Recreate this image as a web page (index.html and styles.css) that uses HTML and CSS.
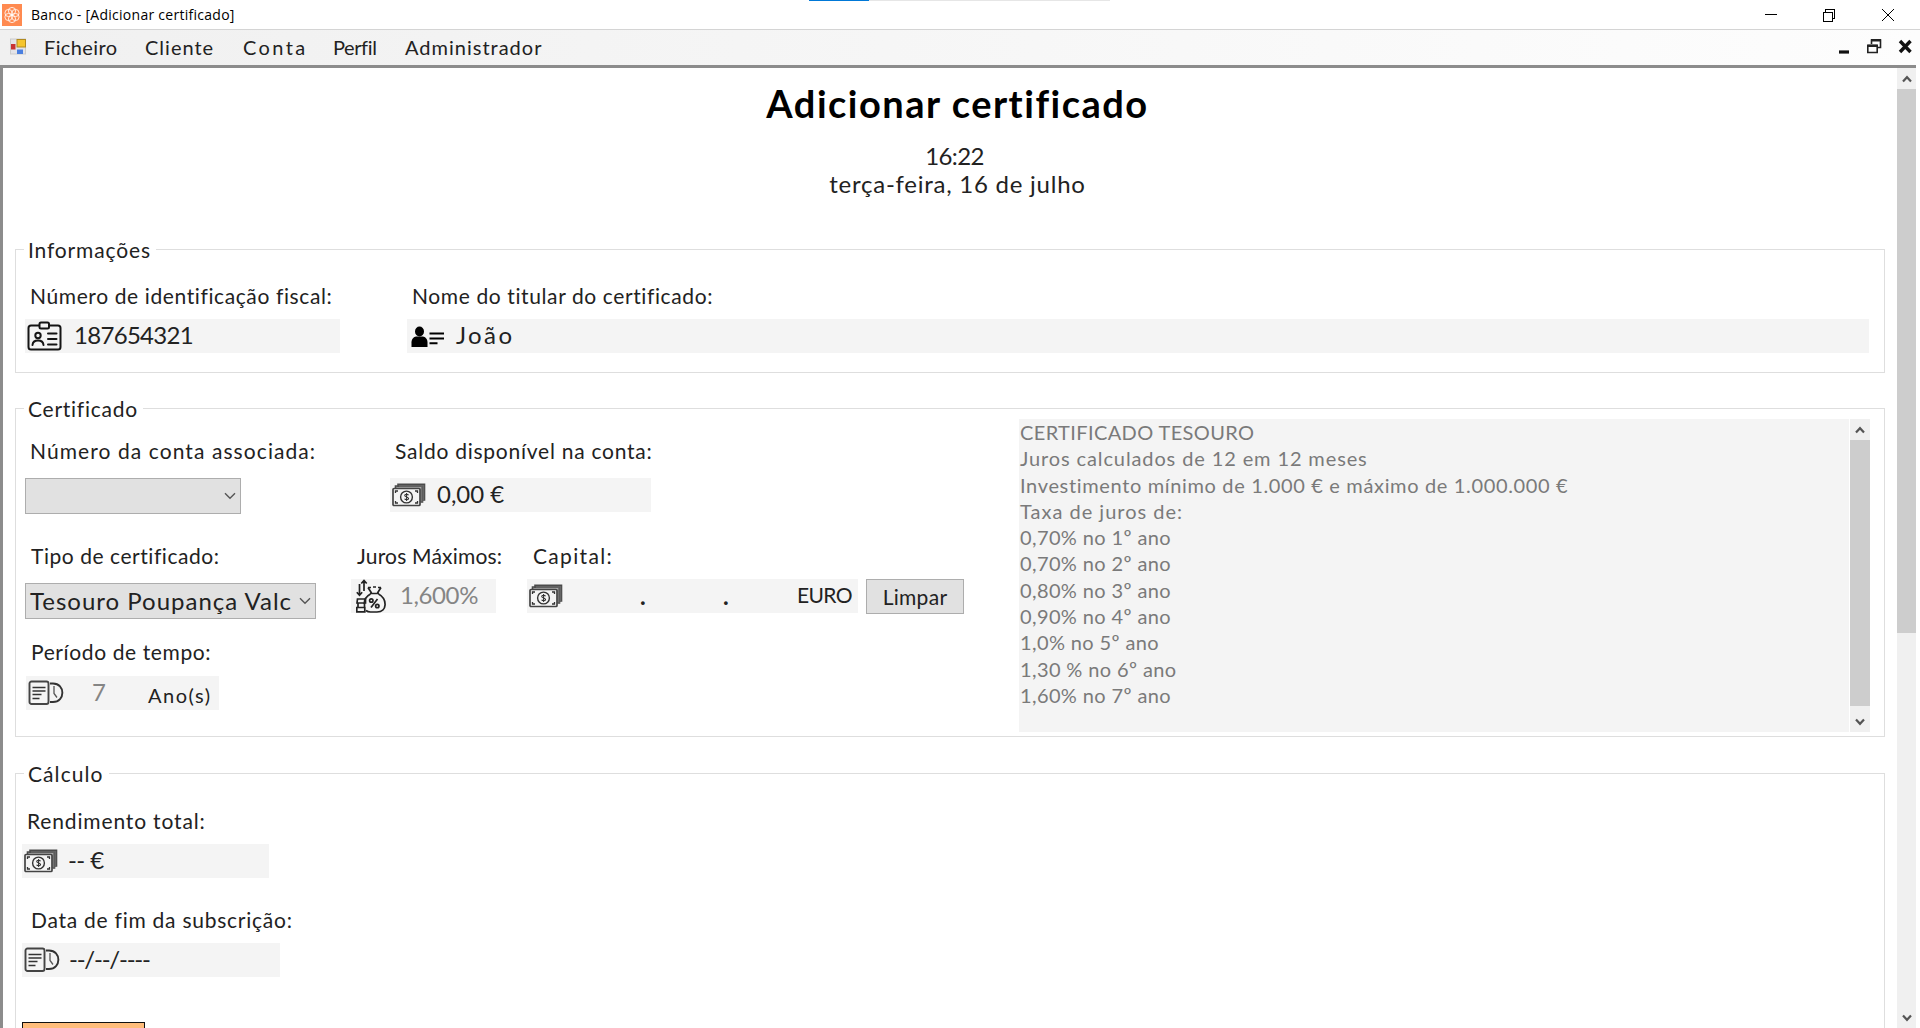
FILE: index.html
```
<!DOCTYPE html>
<html lang="pt">
<head>
<meta charset="utf-8">
<title>Banco - [Adicionar certificado]</title>
<link rel="stylesheet" href="styles.css">
</head>
<body>
<svg class="defs" width="0" height="0">
  <symbol id="cash" viewBox="0 0 34 24">
    <path d="M6 4V1.200h26.500V17H31M3.500 5V3h27v16h-2" fill="#aaa" stroke="#4a4a4a" stroke-width="1.600"/>
    <path d="M30 2v17M31.600 2v15" stroke="#666" stroke-width="1.300"/>
    <rect x="1" y="5.500" width="27" height="17" rx="1" fill="#f4f4f4" stroke="#444" stroke-width="1.700"/>
    <path d="M3.500 10V8H6M23 8h2.500v2M3.500 18v2H6M23 20h2.500v-2" fill="none" stroke="#333" stroke-width="1.300"/>
    <circle cx="14.500" cy="14" r="5.900" fill="none" stroke="#333" stroke-width="1.400"/>
    <path d="M16.500 12.200c-.6-1.200-3.800-1.300-3.800.3 0 1.700 3.900 1.200 3.900 3 0 1.700-3.300 1.500-4 .2M14.600 10v8" fill="none" stroke="#333" stroke-width="1.100"/>
  </symbol>
  <symbol id="period" viewBox="0 0 36 26">
    <rect x="1.500" y="1.500" width="19" height="22.500" rx="2" fill="none" stroke="#444" stroke-width="1.900"/>
    <path d="M4.500 7.500h13M4.500 11h13M4.500 14.500h9M4.500 18.500h7" stroke="#333" stroke-width="1.600"/>
    <path d="M22 3.500h3c12.500 0 12.500 18.500 0 18.500h-3" fill="none" stroke="#333" stroke-width="1.900"/>
    <path d="M26 6v7.500l3 4" fill="none" stroke="#555" stroke-width="1.300"/>
  </symbol>
  <symbol id="up" viewBox="0 0 10 8"><path d="M1 6.500 5 2.200l4 4.300" fill="none" stroke="#555" stroke-width="2.200"/></symbol>
  <symbol id="down" viewBox="0 0 10 8"><path d="M1 1.500 5 5.800l4-4.300" fill="none" stroke="#555" stroke-width="2.200"/></symbol>
  <symbol id="caret" viewBox="0 0 12 8"><path d="M1 1.200 6 6.200l5-5" fill="none" stroke="#555" stroke-width="1.400"/></symbol>
</svg>

<div class="progress"><i></i></div>

<header class="titlebar">
  <svg class="logo" width="20" height="22" viewBox="0 0 20 22">
    <rect width="20" height="22" fill="#ff8a50"/>
    <g fill="none" stroke="#fff" stroke-width=".8">
      <circle cx="10" cy="7" r="3.600"/><circle cx="13.500" cy="9" r="3.600"/><circle cx="13.500" cy="13" r="3.600"/>
      <circle cx="10" cy="15" r="3.600"/><circle cx="6.500" cy="13" r="3.600"/><circle cx="6.500" cy="9" r="3.600"/>
    </g>
  </svg>
  <span class="caption">Banco - [Adicionar certificado]</span>
  <svg class="controls" width="130" height="14" viewBox="0 0 130 14" fill="none" stroke="#000" stroke-width="1" shape-rendering="crispEdges">
    <path d="M0 6.500h12M58.500 4.500h9v9h-9zM60.500 4V1.500h9v9H68"/>
    <path d="M117 1l12 12M129 1l-12 12" shape-rendering="auto"/>
  </svg>
</header>

<nav class="menubar">
  <svg class="form-icon" width="19" height="18" viewBox="0 0 19 18">
    <rect x=".5" y="1" width="15" height="15" fill="#e4e4e8" stroke="#ccc"/>
    <rect x="1" y="6" width="4.500" height="5.500" fill="#c83232"/>
    <rect x="7" y="1.500" width="8.500" height="7.500" fill="#f5c52e" stroke="#b08a20"/>
    <rect x="7" y="11.500" width="6" height="4.500" fill="#4a7fe0"/>
  </svg>
  <span class="m-ficheiro ls-04">Ficheiro</span>
  <span class="m-cliente ls-10">Cliente</span>
  <span class="m-conta ls-24">Conta</span>
  <span class="m-perfil ls-n04">Perfil</span>
  <span class="m-admin ls-10">Administrador</span>
  <svg class="mdi" width="76" height="18" viewBox="0 0 76 18">
    <path d="M1 14h10" stroke="#111" stroke-width="3.200"/>
    <path d="M33.500 6V2h9v7.500H40M29.800 7.500h9.400v7h-9.400z" fill="none" stroke="#222" stroke-width="1.600"/>
    <path d="M33 2.300h10M29.300 7.800h10.500" stroke="#222" stroke-width="2.600"/>
    <path d="M62 3l10.500 11M72.500 3 62 14" stroke="#111" stroke-width="3.400"/>
  </svg>
</nav>

<div class="client">
  <main class="page">
    <h1>Adicionar certificado</h1>
    <p class="clock">16:22</p>
    <p class="date">terça-feira, 16 de julho</p>

    <section class="group info">
      <h2 class="ls-13">Informações</h2>
      <div class="row">
        <div class="cell nif">
          <label class="ls-11">Número de identificação fiscal:</label>
          <div class="box">
            <svg width="36" height="31" viewBox="0 0 36 31" fill="none" stroke="#151515" stroke-width="2" stroke-linecap="round">
              <rect x="1.500" y="4.500" width="32" height="24" rx="2.500"/>
              <rect x="12.500" y="1.500" width="9.500" height="6" rx="1.500" fill="#f4f4f4"/>
              <circle cx="11" cy="14.500" r="2.700"/>
              <path d="M5.500 24c.5-6 10.500-6 11 0M21 12.500h8.500M21 18h8.500M21 23.500h8.500"/>
            </svg>
            <span class="ls-n07">187654321</span>
          </div>
        </div>
        <div class="cell name">
          <label class="ls-11">Nome do titular do certificado:</label>
          <div class="box">
            <svg width="34" height="22" viewBox="0 0 34 22">
              <ellipse cx="8.500" cy="5.500" rx="4.500" ry="5"/>
              <path d="M.5 21v-4.500C.5 12.500 3 11 5 10.500h7c2 .5 4.500 2 4.500 6V21z"/>
              <path d="M18.500 7.500H33M18.500 12.500H33M18.500 17.200h8" stroke="#000" stroke-width="2"/>
            </svg>
            <span class="ls-24">João</span>
          </div>
        </div>
      </div>
    </section>

    <section class="group cert">
      <div class="left">
        <h2 class="ls-12">Certificado</h2>
        <div class="row r1">
          <div class="cell account">
            <label class="ls-15">Número da conta associada:</label>
            <div class="select"><span></span><svg width="12" height="8"><use href="#caret"/></svg></div>
          </div>
          <div class="cell balance">
            <label class="ls-12">Saldo disponível na conta:</label>
            <div class="box"><svg width="34" height="24"><use href="#cash"/></svg><span>0,00 €</span></div>
          </div>
        </div>
        <div class="row r2">
          <div class="cell kind">
            <label class="ls-10">Tipo de certificado:</label>
            <div class="select"><span class="ls-10">Tesouro Poupança Valc</span><svg width="12" height="8"><use href="#caret"/></svg></div>
          </div>
          <div class="cell rate">
            <label class="ls-06">Juros Máximos:</label>
            <div class="box">
              <svg width="30" height="34" viewBox="0 0 30 34" fill="none" stroke="#222" stroke-width="1.700">
                <path d="M3.500 5v11M.8 13.200l2.700 3 2.700-3M8 12V2M5.300 4.500 8 1.500l2.700 3M12 8.500h3M17 8h3M22 8.500h3M12 8.500l3.500 5.500M25 8.500 21.500 14M14 14.500h9"/>
                <path d="M14.500 15C10 17.500 8 21 8.300 25M10 31.500c1.500 1.300 3 1.500 4.500 1.500h6.500c10.500 0 10.500-13 1.500-18"/>
                <path d="M1.500 20h8v4H1zM2 24h6.500v4.500H2zM.8 28.500h8v4.300h-8z"/>
                <circle cx="15.300" cy="21.500" r="1.700"/><circle cx="21.300" cy="27" r="1.700"/><path d="M21.500 20l-6.500 8.500"/>
              </svg>
              <span class="dim ls-n04">1,600%</span>
            </div>
          </div>
          <div class="cell capital">
            <label class="ls-17">Capital:</label>
            <div class="box">
              <svg width="34" height="24"><use href="#cash"/></svg>
              <b class="dot1">.</b><b class="dot2">.</b>
              <span class="euro ls-n05">EURO</span>
            </div>
          </div>
          <button class="clear">Limpar</button>
        </div>
        <div class="row r3">
          <div class="cell term">
            <label class="ls-11">Período de tempo:</label>
            <div class="box"><svg width="36" height="26"><use href="#period"/></svg><span class="dim years">7</span><span class="unit ls-15">Ano(s)</span></div>
          </div>
        </div>
      </div>
      <div class="terms">
        <div class="lines">
          <p class="ls-04">CERTIFICADO TESOURO</p>
          <p class="ls-09">Juros calculados de 12 em 12 meses</p>
          <p class="ls-06">Investimento mínimo de 1.000 € e máximo de 1.000.000 €</p>
          <p class="ls-10">Taxa de juros de:</p>
          <p class="ls-04">0,70% no 1º ano</p>
          <p class="ls-04">0,70% no 2º ano</p>
          <p class="ls-04">0,80% no 3º ano</p>
          <p class="ls-04">0,90% no 4º ano</p>
          <p class="ls-04">1,0% no 5º ano</p>
          <p class="ls-04">1,30 % no 6º ano</p>
          <p class="ls-04">1,60% no 7º ano</p>
        </div>
        <div class="scroll inner">
          <svg width="10" height="8"><use href="#up"/></svg><i></i><svg width="10" height="8"><use href="#down"/></svg>
        </div>
      </div>
    </section>

    <section class="group calc">
      <h2 class="ls-15">Cálculo</h2>
      <div class="cell yield">
        <label class="ls-13">Rendimento total:</label>
        <div class="box"><svg width="34" height="24"><use href="#cash"/></svg><span class="ls-n05">-- €</span></div>
      </div>
      <div class="cell end">
        <label class="ls-12">Data de fim da subscrição:</label>
        <div class="box"><svg width="36" height="26"><use href="#period"/></svg><span class="ls-n12">--/--/----</span></div>
      </div>
      <button class="submit"></button>
    </section>
  </main>
  <div class="scroll outer">
    <svg width="10" height="8"><use href="#up"/></svg><i></i><svg width="10" height="8"><use href="#down"/></svg>
  </div>
</div>
</body>
</html>
```
FILE: styles.css
```
* { box-sizing: border-box; }
html, body { margin: 0; height: 100%; overflow: hidden; }
body {
  height: 1028px;
  display: flex;
  flex-direction: column;
  background: #fff;
  color: #222;
  font: 20px/24px Lato, "Liberation Sans", sans-serif;
}
p, h1, h2 { margin: 0; }
svg { display: block; flex: none; }
span, label, p, h2 { white-space: nowrap; }
.defs { position: absolute; }

/* optical letter spacing */
[class*="ls-"] { letter-spacing: var(--ls); }
.ls-n12 { --ls: -1.23px; }
.ls-n07 { --ls: -.7px; }
.ls-n05 { --ls: -.6px; }
.ls-n04 { --ls: -.4px; }
.ls-04 { --ls: .38px; }
.ls-06 { --ls: .65px; }
.ls-09 { --ls: .88px; }
.ls-10 { --ls: 1px; }
.ls-11 { --ls: 1.06px; }
.ls-12 { --ls: 1.2px; }
.ls-13 { --ls: 1.3px; }
.ls-15 { --ls: 1.53px; }
.ls-17 { --ls: 1.77px; }
.ls-24 { --ls: 2.4px; }

/* window chrome */
.progress {
  position: absolute;
  top: 0;
  left: 809px;
  width: 301px;
  height: 1px;
  background: #e6e6e6;
}
.progress i { display: block; width: 60px; height: 1px; background: #0078d7; }
.titlebar { display: flex; align-items: center; height: 29px; flex: none; padding-left: 2px; }
.caption {
  margin-left: 9px;
  font: 14px/28px "Open Sans", sans-serif;
  letter-spacing: .27px;
  color: #000;
}
.controls { margin-left: auto; margin-right: 25px; }
.menubar {
  display: flex;
  flex: none;
  height: 36px;
  padding: 5px 0 0 10px;
  border-top: 1px solid #d4d4d4;
  background: linear-gradient(90deg, #f0f0f0, #fdfdfd);
}
.form-icon { margin-top: 3px; }
.m-ficheiro { width: 101px; margin-left: 15px; }
.m-cliente { width: 98px; }
.m-conta { width: 90px; }
.m-perfil { width: 72px; }
.mdi { margin: 3px 6px 0 auto; }
.client {
  display: flex;
  flex: 1;
  min-height: 0;
  margin-right: 4px;
  border-top: 3px solid #8c8c8c;
  border-left: 3px solid #8c8c8c;
}
.page { flex: 1; min-width: 0; overflow: hidden; padding: 12px 12px 0; }

h1 { font-size: 38px; line-height: 46px; letter-spacing: 1.5px; text-align: center; padding-left: 15px; color: #000; }
.clock, .date { font-size: 24px; line-height: 28px; text-align: center; padding-left: 15px; }
.clock { margin-top: 16px; padding-left: 9px; letter-spacing: -.6px; }
.date { letter-spacing: .75px; }

/* group boxes */
.group { border: 1px solid #dedede; }
.group h2 {
  width: max-content;
  margin: -12px 0 0 8px;
  padding: 0 5px 0 4px;
  background: #fff;
  font-size: 21px;
  font-weight: 400;
  letter-spacing: calc(var(--ls) - .45px);
}
.info { height: 124px; margin-top: 51px; }
.cert { display: flex; height: 329px; margin-top: 35px; }
.calc { height: 400px; margin-top: 36px; }
.row { display: flex; }
.cell { display: flex; flex-direction: column; }
.cell label {
  display: block;
  padding-left: 5px;
  font-size: 21px;
  letter-spacing: calc(var(--ls) - .45px);
}
.box { display: flex; align-items: center; height: 34px; background: #f4f4f4; }
.box span { font-size: 24px; line-height: 32px; padding-bottom: 2px; }

.info .row { margin-top: 22px; padding-left: 9px; gap: 67px; }
.nif { width: 315px; }
.name { width: 1462px; }
.info .box { margin-top: 11px; }
.nif svg { margin: 0 11px 0 2px; }
.name svg { margin: 1px 11px 0 4px; }

.left { width: 1003px; }
.r1 { margin-top: 18px; padding-left: 9px; }
.r1 .box, .r1 .select { margin-top: 15px; }
.account { width: 365px; }
.account .select { width: 216px; }
.balance { width: 261px; }
.balance svg { margin: 0 11px 0 2px; }

.select {
  display: flex;
  align-items: center;
  justify-content: space-between;
  height: 36px;
  padding: 0 4px;
  border: 1px solid #adadad;
  background: #e1e1e1;
}
.select span { font-size: 24px; line-height: 32px; }

.r2 { margin-top: 30px; padding-left: 9px; }
.r2 .cell label { padding-left: 6px; }
.r2 .box { margin-top: 11px; }
.kind { width: 326px; }
.kind .select { width: 291px; margin-top: 15px; }
.rate { width: 145px; }
.rate svg { margin: 0 14px 0 5px; }
.capital { width: 331px; margin-left: 31px; }
.capital svg { margin-left: 2px; }
.capital b { font-size: 24px; line-height: 34px; }
.dot1 { margin-left: 77px; width: 83px; }
.dot2 { width: 74px; }
.capital .euro { font-size: 21px; }
button { padding: 0; border: 1px solid #adadad; background: #e1e1e1; font: inherit; color: inherit; }
.clear { width: 98px; height: 35px; margin: 35px 0 0 8px; font-size: 21px; letter-spacing: .3px; }

.r3 { margin-top: 21px; padding-left: 10px; }
.term { width: 193px; }
.term .box { margin-top: 12px; }
.term svg { margin-left: 2px; }
.years { margin-left: 28px; width: 56px; }
.term .unit { font-size: 20px; padding: 4px 0 0; }
.dim { color: #858585; }

.terms { display: flex; width: 851px; height: 313px; margin-top: 10px; background: #f4f4f4; }
.lines { flex: 1; padding-left: 1px; color: #7a7a7a; line-height: 26.3px; }

/* scroll bars */
.scroll { display: flex; flex-direction: column; align-items: center; background: #f0f0f0; }
.scroll i { width: 100%; background: #cdcdcd; }
.inner { width: 21px; padding: 7px 0 6px; border-left: 1px solid #fff; }
.inner i { height: 266px; margin: 6px 0 12px; }
.outer { width: 19px; padding-top: 7px; }
.outer i { height: 544px; margin: 6px 0 381px; }

.yield { width: 247px; margin: 23px 0 0 6px; }
.yield .box { margin-top: 11px; }
.yield svg { margin: 0 10px 0 2px; }
.end { width: 258px; margin: 30px 0 0 6px; }
.end label { padding-left: 9px; }
.end .box { margin-top: 11px; }
.end svg { margin: 0 9px 0 2px; }
.submit { display: block; width: 123px; height: 40px; margin: 45px 0 0 6px; border: 1px solid #111; background: #ffbd7b; }
```
